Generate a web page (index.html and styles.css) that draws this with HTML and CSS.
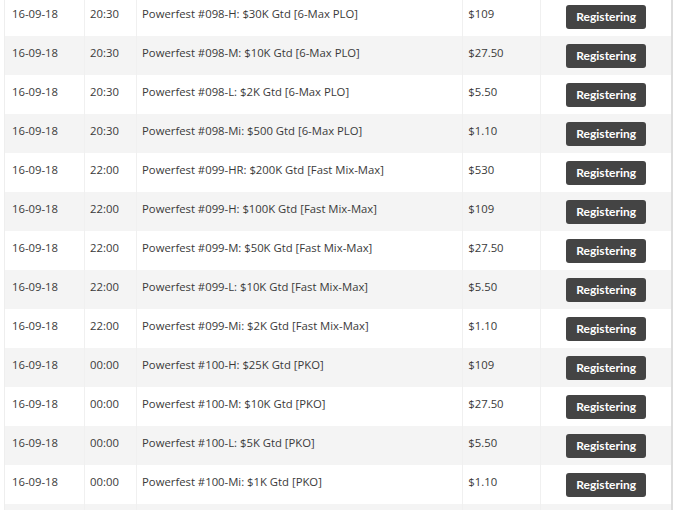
FILE: index.html
```html
<!DOCTYPE html>
<html>
<head>
<meta charset="utf-8">
<link rel="stylesheet" href="styles.css">
</head>
<body>
<div class="wrap">
<table class="events">
<colgroup>
<col class="c-date"><col class="c-time"><col class="c-name"><col class="c-price"><col class="c-act">
</colgroup>
<tbody>
<tr><td>16-09-18</td><td>20:30</td><td>Powerfest #098-H: $30K Gtd [6-Max PLO]</td><td>$109</td><td class="act"><span class="btn">Registering</span></td></tr>
<tr><td>16-09-18</td><td>20:30</td><td>Powerfest #098-M: $10K Gtd [6-Max PLO]</td><td>$27.50</td><td class="act"><span class="btn">Registering</span></td></tr>
<tr><td>16-09-18</td><td>20:30</td><td>Powerfest #098-L: $2K Gtd [6-Max PLO]</td><td>$5.50</td><td class="act"><span class="btn">Registering</span></td></tr>
<tr><td>16-09-18</td><td>20:30</td><td>Powerfest #098-Mi: $500 Gtd [6-Max PLO]</td><td>$1.10</td><td class="act"><span class="btn">Registering</span></td></tr>
<tr><td>16-09-18</td><td>22:00</td><td>Powerfest #099-HR: $200K Gtd [Fast Mix-Max]</td><td>$530</td><td class="act"><span class="btn">Registering</span></td></tr>
<tr><td>16-09-18</td><td>22:00</td><td>Powerfest #099-H: $100K Gtd [Fast Mix-Max]</td><td>$109</td><td class="act"><span class="btn">Registering</span></td></tr>
<tr><td>16-09-18</td><td>22:00</td><td>Powerfest #099-M: $50K Gtd [Fast Mix-Max]</td><td>$27.50</td><td class="act"><span class="btn">Registering</span></td></tr>
<tr><td>16-09-18</td><td>22:00</td><td>Powerfest #099-L: $10K Gtd [Fast Mix-Max]</td><td>$5.50</td><td class="act"><span class="btn">Registering</span></td></tr>
<tr><td>16-09-18</td><td>22:00</td><td>Powerfest #099-Mi: $2K Gtd [Fast Mix-Max]</td><td>$1.10</td><td class="act"><span class="btn">Registering</span></td></tr>
<tr><td>16-09-18</td><td>00:00</td><td>Powerfest #100-H: $25K Gtd [PKO]</td><td>$109</td><td class="act"><span class="btn">Registering</span></td></tr>
<tr><td>16-09-18</td><td>00:00</td><td>Powerfest #100-M: $10K Gtd [PKO]</td><td>$27.50</td><td class="act"><span class="btn">Registering</span></td></tr>
<tr><td>16-09-18</td><td>00:00</td><td>Powerfest #100-L: $5K Gtd [PKO]</td><td>$5.50</td><td class="act"><span class="btn">Registering</span></td></tr>
<tr><td>16-09-18</td><td>00:00</td><td>Powerfest #100-Mi: $1K Gtd [PKO]</td><td>$1.10</td><td class="act"><span class="btn">Registering</span></td></tr>
<tr class="cut"><td></td><td></td><td></td><td></td><td class="act"></td></tr>
</tbody>
</table>
</div>
</body>
</html>
```
FILE: styles.css
```css
html, body {
  margin: 0;
  padding: 0;
  background: #fff;
  overflow: hidden;
}
.wrap {
  margin-top: -3px;
  padding-left: 4px;
}
.events {
  border-collapse: collapse;
  table-layout: fixed;
  width: 669px;
  border-left: 1px solid #eeeeee;
  border-right: 2px solid #dddddd;
  font-family: "Open Sans", "Noto Sans", sans-serif;
  font-size: 11.3px;
  color: #3a3a3a;
}
.c-date { width: 80px; }
.c-time { width: 52px; }
.c-name { width: 326px; }
.c-price { width: 78px; }
.c-act { width: 131px; }
.events tr:nth-child(even) td { background: #f4f4f4; }
.events td {
  height: 39px;
  box-sizing: border-box;
  padding: 8px 5px 0 5px;
  vertical-align: top;
  line-height: 17px;
  border-left: 1px solid #f0f0f0;
  white-space: nowrap;
}
.events td:first-child {
  border-left: none;
  padding-left: 7px;
}
.events td.act {
  text-align: center;
  padding-top: 8px;
}
.btn {
  display: inline-block;
  background: #444;
  color: #fff;
  font-family: "Lato", sans-serif;
  font-weight: bold;
  font-size: 12px;
  line-height: 24px;
  height: 24px;
  padding: 0 10px;
  border-radius: 3px;
}
```
